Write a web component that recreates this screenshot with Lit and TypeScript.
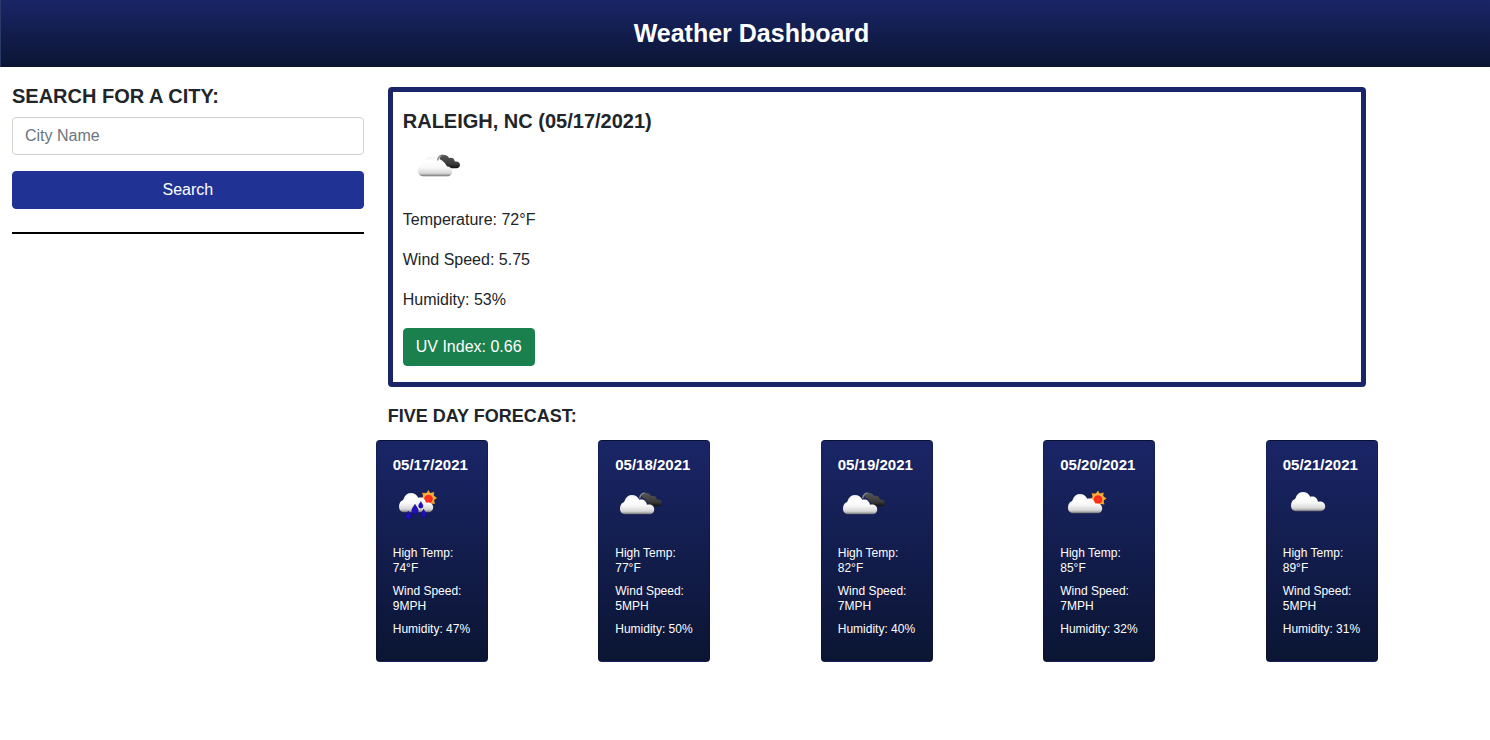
import { LitElement, html, svg, css } from "lit";
import { customElement, property } from "lit/decorators.js";

type Sky = "cloud" | "broken" | "partly" | "rain";

interface Day {
  date: string;
  sky: Sky;
  temp: number;
  wind: number;
  humidity: number;
}

const DAYS: Day[] = [
  { date: "05/17/2021", sky: "rain", temp: 74, wind: 9, humidity: 47 },
  { date: "05/18/2021", sky: "broken", temp: 77, wind: 5, humidity: 50 },
  { date: "05/19/2021", sky: "broken", temp: 82, wind: 7, humidity: 40 },
  { date: "05/20/2021", sky: "partly", temp: 85, wind: 7, humidity: 32 },
  { date: "05/21/2021", sky: "cloud", temp: 89, wind: 5, humidity: 31 },
];

const OFFSET: Record<Sky, string> = {
  cloud: "translate(8 14)",
  broken: "translate(5 17)",
  partly: "translate(8 16)",
  rain: "translate(6 15)",
};

const sun = (at: string) => svg`<g transform=${at}>
  <path fill="#f3a02c" d="M0-8.6 1.6-5.6 5.8-6.6 5.2-3 8.6-.6 5.6 1.4 6.4 5.4 2.8 5 .4 8-1.6 5.4-5.8 6.2-5.4 2.4-8.4.2-5.4-2-6.4-5.8-2.2-5.6Z"/>
  <circle r="5.7" fill="#f9b545"/>
  <circle cy=".6" r="4.6" fill="url(#core)"/>
</g>`;

const darkCloud = svg`
  <path fill="none" stroke="#888" stroke-width="1.4" d="M24.6 20.5C25.2 16.8 27.2 15 30.4 15.2"/>
  <path fill="url(#dark)" d="M26.5 19C27.3 16 29.6 14.6 32 15 34.2 15.4 35.6 16.6 36 18.2 38.8 16.8 41.6 18.6 41.8 21.6 44.8 21 47 22.6 47 25 47 27 45.6 28.2 43.4 28.2H35C33 24 30 20.5 26.5 19Z"/>`;

const drop = (x: number, y: number, s: number) =>
  svg`<path fill="#2410b8" stroke="#100680" stroke-width=".5" transform="translate(${x} ${y}) scale(${s})" d="M0-4.2C1.2-2 2.8-.4 2.8 1.4A2.8 2.8 0 0 1-2.8 1.4C-2.8-.4-1.2-2 0-4.2Z"/>`;

@customElement("weather-icon")
export class WeatherIcon extends LitElement {
  @property() sky: Sky = "cloud";

  static styles = css`
    :host {
      display: block;
      width: 50px;
      height: 50px;
    }
    .icon {
      display: block;
      width: 100%;
      height: 100%;
    }
  `;

  render() {
    return html`<svg class="icon" viewBox="0 0 50 50" aria-hidden="true">
      <defs>
        <linearGradient id="white" x1="0" y1="0" x2="0" y2="1">
          <stop offset="0" stop-color="#f0f0f0" />
          <stop offset=".2" stop-color="#fff" />
          <stop offset=".55" stop-color="#f8f8f8" />
          <stop offset=".84" stop-color="#d8d8d8" />
          <stop offset=".94" stop-color="#a4a4a4" />
          <stop offset="1" stop-color="#666" />
        </linearGradient>
        <linearGradient id="dark" x1="0" y1="0" x2="0" y2="1">
          <stop offset="0" stop-color="#585858" />
          <stop offset=".7" stop-color="#383838" />
          <stop offset="1" stop-color="#111" />
        </linearGradient>
        <radialGradient id="core">
          <stop offset="0" stop-color="#ff3a1c" />
          <stop offset=".75" stop-color="#f5281b" />
          <stop offset="1" stop-color="#f5702b" />
        </radialGradient>
      </defs>
      ${this.sky === "broken" ? darkCloud : ""}
      ${this.sky === "partly" ? sun("translate(38 21)") : ""}
      ${this.sky === "rain" ? sun("translate(35.5 20.5)") : ""}
      <path
        fill="url(#white)"
        transform=${OFFSET[this.sky]}
        d="M5 19.2C1.8 19.2 0 17 0 13.6 0 10.6 1.4 8.4 3.2 7.6 4 7.2 4.4 6.8 4.8 5.6 5.8 2 8.6 0 12 0 15.4 0 17.8 1.8 19.2 4.8 23 3.6 26.4 5.8 27 9.8 31 8.8 34.2 11 34.2 14.2 34.2 17.2 32.2 19.2 29.2 19.2Z"
      />
      ${this.sky === "rain"
        ? [drop(15.3, 37, 0.95), drop(22, 31.2, 1.15), drop(27.8, 26.8, 0.8), drop(30.6, 35.2, 0.95)]
        : ""}
    </svg>`;
  }
}

@customElement("app-root")
export class AppRoot extends LitElement {
  static styles = css`
    :host {
      display: block;
      min-height: 100vh;
      overflow-x: hidden;
      background: #fff;
      color: #212529;
      font: 16px/24px "Liberation Sans", Arial, sans-serif;
    }
    *,
    *::before,
    *::after {
      box-sizing: border-box;
    }
    h1,
    h2,
    h3,
    p {
      margin: 0;
    }
    .header {
      padding: 18px 0 19px 12px;
      border-left: 1px solid #2a3a66;
      background: linear-gradient(#1a2567, #0b1533);
      color: #fff;
      text-align: center;
    }
    .title {
      font-size: 25px;
      line-height: 30px;
    }
    .layout {
      display: grid;
      grid-template-columns: 3fr 8fr 1fr;
      margin-right: -13px;
    }
    .search {
      padding: 17px 12px 0;
    }
    .heading {
      margin-bottom: 8px;
      font-size: 20px;
      line-height: 24px;
    }
    .search .heading {
      margin-bottom: 9px;
    }
    .label {
      display: block;
    }
    .field,
    .button {
      display: block;
      height: 38px;
      padding: 6px 12px;
      border: 1px solid #ced4da;
      border-radius: 4px;
      font: inherit;
    }
    .field {
      width: 100%;
      margin-bottom: 16px;
      background: #fff;
      color: #212529;
    }
    .field::placeholder {
      color: #6c757d;
      opacity: 1;
    }
    .button {
      color: #fff;
      cursor: pointer;
    }
    .submit {
      width: 100%;
      background: #213295;
      border-color: #213295;
    }
    .rule {
      height: 2px;
      margin: 23px 0 0;
      border: 0;
      background: #000;
    }
    .results {
      padding-top: 20px;
    }
    .current {
      margin: 0 12px;
      padding: 17px 10px 16px;
      border: 5px solid #1a2567;
      border-radius: 4px;
    }
    .now {
      margin: -1px 10px 18px;
    }
    .stat {
      margin-bottom: 16px;
    }
    .uv {
      background: #1a804e;
      border-color: #1a804e;
    }
    .subheading {
      margin: 19px 12px 13px;
      font-size: 18px;
      line-height: 21px;
    }
    .days {
      display: flex;
      justify-content: space-between;
    }
    .card {
      width: 112px;
      min-height: 222px;
      padding: 16px;
      border: 1px solid rgba(0, 0, 0, 0.13);
      border-radius: 4px;
      background: linear-gradient(#1a2567, #0b1533);
      color: #fff;
      font-size: 12px;
      line-height: 15px;
    }
    .date {
      margin-bottom: 5px;
      font-size: 15px;
      line-height: 16px;
    }
    .sky {
      margin-bottom: 18px;
    }
    .line {
      margin-right: -4px;
      margin-bottom: 8px;
    }
    .line:last-child {
      margin-bottom: 0;
    }
  `;

  render() {
    return html`
      <header class="header"><h1 class="title">Weather Dashboard</h1></header>
      <main class="layout">
        <form class="search" @submit=${(e: Event) => e.preventDefault()}>
          <h2 class="heading"><label class="label" for="city">SEARCH FOR A CITY:</label></h2>
          <input class="field" id="city" type="text" placeholder="City Name" />
          <button class="button submit" type="submit">Search</button>
          <hr class="rule" />
        </form>
        <div class="results">
          <section class="current">
            <h2 class="heading">RALEIGH, NC (05/17/2021)</h2>
            <weather-icon class="now" sky="broken"></weather-icon>
            <p class="stat">Temperature: 72°F</p>
            <p class="stat">Wind Speed: 5.75</p>
            <p class="stat">Humidity: 53%</p>
            <button class="button uv" type="button">UV Index: 0.66</button>
          </section>
          <h2 class="subheading">FIVE DAY FORECAST:</h2>
          <div class="days">
            ${DAYS.map(
              (d) => html`<article class="card">
                <h3 class="date">${d.date}</h3>
                <weather-icon class="sky" sky=${d.sky}></weather-icon>
                <p class="line">High Temp: ${d.temp}°F</p>
                <p class="line">Wind Speed: ${d.wind}MPH</p>
                <p class="line">Humidity: ${d.humidity}%</p>
              </article>`
            )}
          </div>
        </div>
      </main>
    `;
  }
}
